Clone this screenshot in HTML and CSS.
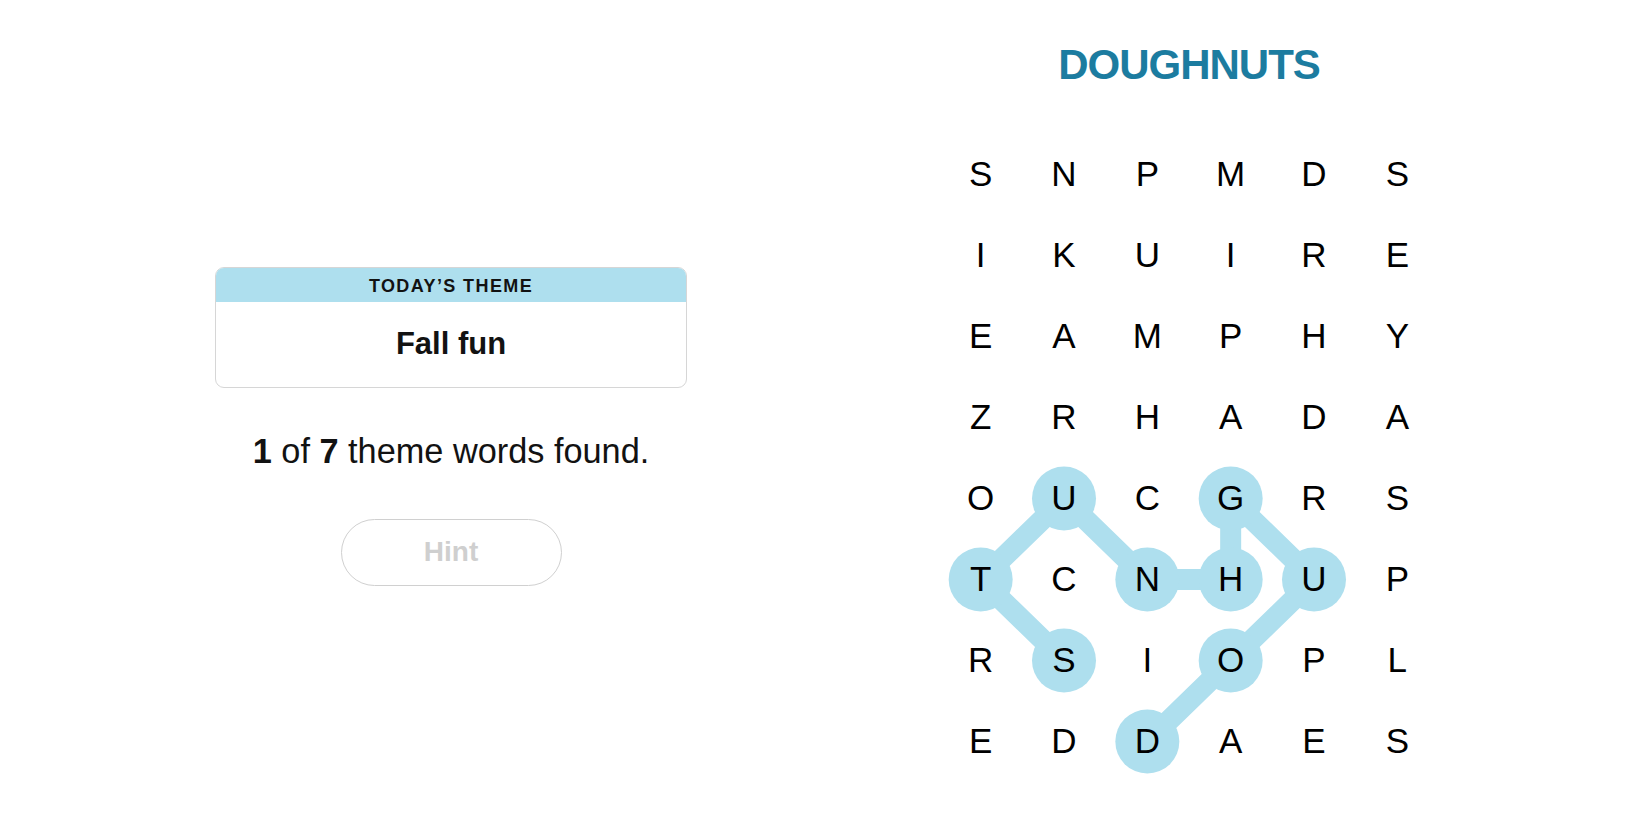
FILE: index.html
```html
<!DOCTYPE html>
<html lang="en">
<head>
<meta charset="utf-8">
<title>Strands</title>
<link rel="stylesheet" href="styles.css">
</head>
<body>
<div class="page">
  <section class="info">
    <div class="theme-card">
      <div class="theme-head">TODAY’S THEME</div>
      <div class="theme-body">Fall fun</div>
    </div>
    <p class="progress"><b>1</b> of <b>7</b> theme words found.</p>
    <button class="hint" type="button">Hint</button>
  </section>
  <section class="board">
    <h1 class="word">DOUGHNUTS</h1>
    <div class="grid-wrap">
      <svg class="paths" width="500" height="648" viewBox="0 0 500 648">
        <polyline class="path-line" points="208.33,607.5 291.67,526.5 375,445.5 291.67,364.5 291.67,445.5 208.33,445.5 125,364.5 41.67,445.5 125,526.5"/>
        <circle class="dot" cx="208.33" cy="607.5" r="32"/>
        <circle class="dot" cx="291.67" cy="526.5" r="32"/>
        <circle class="dot" cx="375" cy="445.5" r="32"/>
        <circle class="dot" cx="291.67" cy="364.5" r="32"/>
        <circle class="dot" cx="291.67" cy="445.5" r="32"/>
        <circle class="dot" cx="208.33" cy="445.5" r="32"/>
        <circle class="dot" cx="125" cy="364.5" r="32"/>
        <circle class="dot" cx="41.67" cy="445.5" r="32"/>
        <circle class="dot" cx="125" cy="526.5" r="32"/>
      </svg>
      <div class="grid">
        <span>S</span><span>N</span><span>P</span><span>M</span><span>D</span><span>S</span>
        <span>I</span><span>K</span><span>U</span><span>I</span><span>R</span><span>E</span>
        <span>E</span><span>A</span><span>M</span><span>P</span><span>H</span><span>Y</span>
        <span>Z</span><span>R</span><span>H</span><span>A</span><span>D</span><span>A</span>
        <span>O</span><span>U</span><span>C</span><span>G</span><span>R</span><span>S</span>
        <span>T</span><span>C</span><span>N</span><span>H</span><span>U</span><span>P</span>
        <span>R</span><span>S</span><span>I</span><span>O</span><span>P</span><span>L</span>
        <span>E</span><span>D</span><span>D</span><span>A</span><span>E</span><span>S</span>
      </div>
    </div>
  </section>
</div>
</body>
</html>
```
FILE: styles.css
```css
* { box-sizing: border-box; }

html, body {
  margin: 0;
  padding: 0;
  background: #ffffff;
}

body {
  font-family: "Liberation Sans", Arial, sans-serif;
  color: #121212;
  width: 1650px;
  height: 825px;
  overflow: hidden;
}

.page {
  display: grid;
  grid-template-columns: 902px 574px;
  height: 825px;
}

/* Left column */
.info {
  display: flex;
  flex-direction: column;
  align-items: center;
  padding-top: 267px;
}

.theme-card {
  width: 472px;
  border: 1.5px solid #d6d6d6;
  border-radius: 9px;
  overflow: hidden;
  background: #fff;
}

.theme-head {
  height: 34px;
  background: #aedfee;
  display: flex;
  align-items: center;
  justify-content: center;
  font-size: 18px;
  font-weight: 700;
  letter-spacing: 1.4px;
  color: #121212;
  padding-top: 2px;
}

.theme-body {
  height: 85px;
  display: flex;
  align-items: center;
  justify-content: center;
  font-size: 31px;
  font-weight: 700;
  color: #121212;
  padding-bottom: 2px;
}

.progress {
  margin: 43px 0 0;
  font-size: 34.3px;
  line-height: 40.8px;
  color: #121212;
}

.progress b { font-weight: 700; }

.hint {
  margin-top: 47px;
  width: 221px;
  height: 67px;
  border: 1.5px solid #d0d0d0;
  border-radius: 34px;
  background: #fff;
  font-family: "Liberation Sans", Arial, sans-serif;
  font-size: 28px;
  font-weight: 700;
  color: #cfcfcf;
  padding: 0;
}

/* Right column */
.board {
  display: flex;
  flex-direction: column;
  align-items: center;
  padding-top: 44px;
}

.word {
  margin: 0;
  font-size: 42px;
  line-height: 42px;
  font-weight: 700;
  letter-spacing: -1px;
  color: #1c7ca0;
}

.grid-wrap {
  position: relative;
  margin-top: 47.5px;
  width: 500px;
  height: 648px;
}

.paths {
  position: absolute;
  left: 0;
  top: 0;
}

.path-line {
  fill: none;
  stroke: #aedfee;
  stroke-width: 21;
  stroke-linejoin: round;
  stroke-linecap: round;
}

.dot { fill: #aedfee; }

.grid {
  position: relative;
  display: grid;
  grid-template-columns: repeat(6, 83.333px);
  grid-auto-rows: 81px;
}

.grid span {
  display: flex;
  align-items: center;
  justify-content: center;
  font-size: 35px;
  line-height: 1;
  color: #000;
  padding-bottom: 2px;
}
```
